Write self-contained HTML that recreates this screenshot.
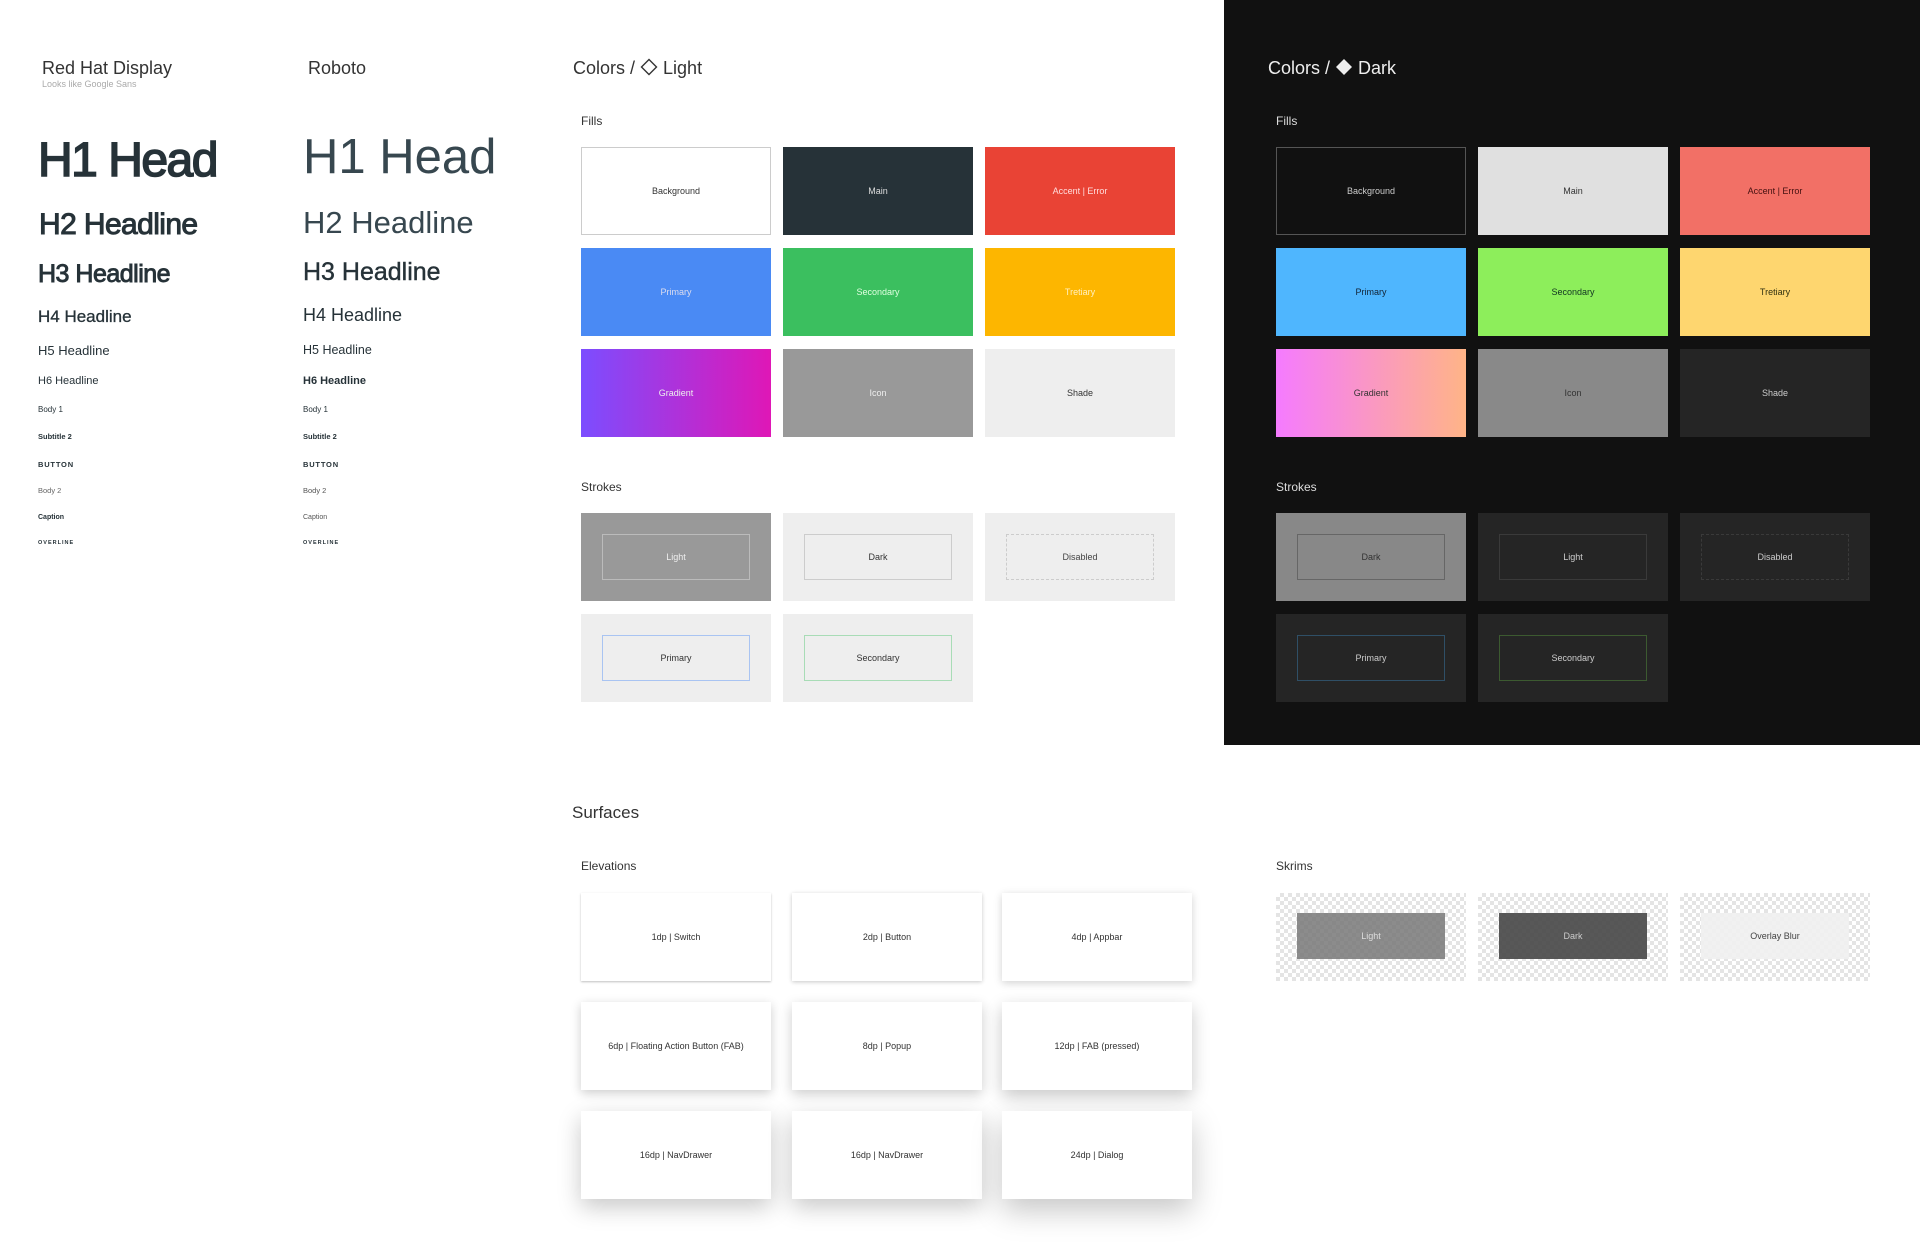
<!DOCTYPE html>
<html><head><meta charset="utf-8"><style>
*{margin:0;padding:0;box-sizing:border-box}
body{width:1920px;height:1242px;background:#fff;position:relative;overflow:hidden;font-family:"Liberation Sans",sans-serif;color:#263238}
.a{position:absolute;white-space:nowrap}
.sw{position:absolute;width:190px;height:88px;display:flex;align-items:center;justify-content:center;font-size:9px}
.in{position:absolute;left:21px;top:21px;width:148px;height:46px;display:flex;align-items:center;justify-content:center;font-size:9px}
.card{position:absolute;width:190px;height:88px;background:#fff;display:flex;align-items:center;justify-content:center;font-size:9px;color:#333}
.chk{background-color:#fff;background-image:conic-gradient(#e4e4e4 25%,#fff 0 50%,#e4e4e4 0 75%,#fff 0);background-size:8px 8px}
.md{-webkit-text-stroke:0.9px #263238}
</style></head><body>

<!-- Typography -->
<div class="a" style="left:42px;top:58px;font-size:18px;color:#333">Red Hat Display</div>
<div class="a" style="left:42px;top:79px;font-size:9px;color:#aaa">Looks like Google Sans</div>
<div class="a" style="left:308px;top:58px;font-size:18px;color:#333">Roboto</div>

<div class="a md" style="left:38px;top:131px;font-size:48px;letter-spacing:-1.5px;line-height:60px;-webkit-text-stroke:1.6px #263238">H1 Head</div>
<div class="a md" style="left:39px;top:205px;font-size:30px;letter-spacing:-0.6px;line-height:40px;-webkit-text-stroke:1px #263238">H2 Headline</div>
<div class="a md" style="left:38px;top:258px;font-size:25px;letter-spacing:-0.5px;line-height:32px">H3 Headline</div>
<div class="a" style="left:38px;top:305px;font-size:17px;line-height:24px;-webkit-text-stroke:0.3px #263238">H4 Headline</div>
<div class="a" style="left:38px;top:342px;font-size:13px;line-height:18px">H5 Headline</div>
<div class="a" style="left:38px;top:374px;font-size:11px;line-height:14px">H6 Headline</div>
<div class="a" style="left:38px;top:405px;font-size:8px;line-height:10px">Body 1</div>
<div class="a" style="left:38px;top:432px;font-size:7.5px;font-weight:bold;line-height:10px">Subtitle 2</div>
<div class="a" style="left:38px;top:460px;font-size:7.5px;font-weight:bold;letter-spacing:0.8px;line-height:10px">BUTTON</div>
<div class="a" style="left:38px;top:486px;font-size:7.5px;color:#666;line-height:10px">Body 2</div>
<div class="a" style="left:38px;top:513px;font-size:7px;font-weight:bold;line-height:10px">Caption</div>
<div class="a" style="left:38px;top:539px;font-size:5.5px;font-weight:bold;letter-spacing:1px;line-height:8px">OVERLINE</div>

<div class="a" style="left:303px;top:127px;font-size:49px;font-weight:300;line-height:60px;color:#37474f">H1 Head</div>
<div class="a" style="left:303px;top:203px;font-size:31px;line-height:40px;color:#37474f">H2 Headline</div>
<div class="a" style="left:303px;top:256px;font-size:25px;line-height:32px;-webkit-text-stroke:0.4px #263238">H3 Headline</div>
<div class="a" style="left:303px;top:303px;font-size:18px;line-height:24px">H4 Headline</div>
<div class="a" style="left:303px;top:341px;font-size:12.5px;line-height:18px">H5 Headline</div>
<div class="a" style="left:303px;top:374px;font-size:11px;font-weight:bold;line-height:14px">H6 Headline</div>
<div class="a" style="left:303px;top:405px;font-size:8px;line-height:10px">Body 1</div>
<div class="a" style="left:303px;top:432px;font-size:7.5px;font-weight:bold;line-height:10px">Subtitle 2</div>
<div class="a" style="left:303px;top:460px;font-size:7.5px;font-weight:bold;letter-spacing:0.8px;line-height:10px">BUTTON</div>
<div class="a" style="left:303px;top:486px;font-size:7.5px;color:#555;line-height:10px">Body 2</div>
<div class="a" style="left:303px;top:513px;font-size:7px;color:#555;line-height:10px">Caption</div>
<div class="a" style="left:303px;top:539px;font-size:5.5px;font-weight:bold;letter-spacing:1px;line-height:8px">OVERLINE</div>

<!-- Light colors -->
<div class="a" style="left:573px;top:57px;font-size:18px;color:#333;line-height:22px">Colors / <svg width="18" height="18" viewBox="0 0 18 18" style="vertical-align:-2px"><path d="M9 1.5L16.5 9 9 16.5 1.5 9Z" fill="none" stroke="#333" stroke-width="1.4"/></svg> Light</div>
<div class="a" style="left:581px;top:114px;font-size:12px;color:#333">Fills</div>
<div class="sw" style="left:581px;top:147px;border:1px solid #ccc;color:#333">Background</div>
<div class="sw" style="left:783px;top:147px;background:#263238;color:#ddd">Main</div>
<div class="sw" style="left:985px;top:147px;background:#e94335;color:#fdd">Accent | Error</div>
<div class="sw" style="left:581px;top:248px;background:#4a8af4;color:#dde">Primary</div>
<div class="sw" style="left:783px;top:248px;background:#3bbf5f;color:#e0ffe0">Secondary</div>
<div class="sw" style="left:985px;top:248px;background:#fdb600;color:#fff0c0">Tretiary</div>
<div class="sw" style="left:581px;top:349px;background:linear-gradient(90deg,#7c4dff,#df17b6);color:#eee">Gradient</div>
<div class="sw" style="left:783px;top:349px;background:#999;color:#eee">Icon</div>
<div class="sw" style="left:985px;top:349px;background:#eee;color:#333">Shade</div>

<div class="a" style="left:581px;top:480px;font-size:12px;color:#333">Strokes</div>
<div class="sw" style="left:581px;top:513px;background:#999"><div class="in" style="border:1px solid #bbb;color:#eee">Light</div></div>
<div class="sw" style="left:783px;top:513px;background:#eee"><div class="in" style="border:1px solid #ccc;color:#333">Dark</div></div>
<div class="sw" style="left:985px;top:513px;background:#eee"><div class="in" style="border:1px dashed #ccc;color:#444">Disabled</div></div>
<div class="sw" style="left:581px;top:614px;background:#eee"><div class="in" style="border:1px solid #a9c4f2;color:#333">Primary</div></div>
<div class="sw" style="left:783px;top:614px;background:#eee"><div class="in" style="border:1px solid #a8dcb6;color:#333">Secondary</div></div>

<!-- Dark panel -->
<div class="a" style="left:1224px;top:0;width:696px;height:745px;background:#111"></div>
<div class="a" style="left:1268px;top:57px;font-size:18px;color:#eee;line-height:22px">Colors / <svg width="18" height="18" viewBox="0 0 18 18" style="vertical-align:-2px"><path d="M9 1L17 9 9 17 1 9Z" fill="#eee"/></svg> Dark</div>
<div class="a" style="left:1276px;top:114px;font-size:12px;color:#ddd">Fills</div>
<div class="sw" style="left:1276px;top:147px;border:1px solid #555;color:#ccc">Background</div>
<div class="sw" style="left:1478px;top:147px;background:#e0e0e0;color:#333">Main</div>
<div class="sw" style="left:1680px;top:147px;background:#f27066;color:#411">Accent | Error</div>
<div class="sw" style="left:1276px;top:248px;background:#4fb6fe;color:#123">Primary</div>
<div class="sw" style="left:1478px;top:248px;background:#8dee5b;color:#132">Secondary</div>
<div class="sw" style="left:1680px;top:248px;background:#fed66f;color:#331">Tretiary</div>
<div class="sw" style="left:1276px;top:349px;background:linear-gradient(90deg,#f57bff,#ffb487);color:#333">Gradient</div>
<div class="sw" style="left:1478px;top:349px;background:#898989;color:#333">Icon</div>
<div class="sw" style="left:1680px;top:349px;background:#252525;color:#ccc">Shade</div>

<div class="a" style="left:1276px;top:480px;font-size:12px;color:#ddd">Strokes</div>
<div class="sw" style="left:1276px;top:513px;background:#888"><div class="in" style="border:1px solid #666;color:#333">Dark</div></div>
<div class="sw" style="left:1478px;top:513px;background:#252525"><div class="in" style="border:1px solid #3a3a3a;color:#ccc">Light</div></div>
<div class="sw" style="left:1680px;top:513px;background:#252525"><div class="in" style="border:1px dashed #3a3a3a;color:#ccc">Disabled</div></div>
<div class="sw" style="left:1276px;top:614px;background:#252525"><div class="in" style="border:1px solid #2f4f66;color:#ccc">Primary</div></div>
<div class="sw" style="left:1478px;top:614px;background:#252525"><div class="in" style="border:1px solid #3c5a30;color:#ccc">Secondary</div></div>

<!-- Surfaces -->
<div class="a" style="left:572px;top:803px;font-size:17px;color:#333">Surfaces</div>
<div class="a" style="left:581px;top:859px;font-size:12px;color:#333">Elevations</div>
<div class="card" style="left:581px;top:893px;box-shadow:0 1px 2px rgba(0,0,0,.25)">1dp | Switch</div>
<div class="card" style="left:792px;top:893px;box-shadow:0 1px 4px rgba(0,0,0,.22)">2dp | Button</div>
<div class="card" style="left:1002px;top:893px;box-shadow:0 2px 8px rgba(0,0,0,.18)">4dp | Appbar</div>
<div class="card" style="left:581px;top:1002px;box-shadow:0 3px 10px rgba(0,0,0,.2)">6dp | Floating Action Button (FAB)</div>
<div class="card" style="left:792px;top:1002px;box-shadow:0 4px 12px rgba(0,0,0,.2)">8dp | Popup</div>
<div class="card" style="left:1002px;top:1002px;box-shadow:0 6px 16px rgba(0,0,0,.22)">12dp | FAB (pressed)</div>
<div class="card" style="left:581px;top:1111px;box-shadow:0 8px 22px rgba(0,0,0,.22)">16dp | NavDrawer</div>
<div class="card" style="left:792px;top:1111px;box-shadow:0 8px 22px rgba(0,0,0,.22)">16dp | NavDrawer</div>
<div class="card" style="left:1002px;top:1111px;box-shadow:0 12px 28px rgba(0,0,0,.22)">24dp | Dialog</div>

<div class="a" style="left:1276px;top:859px;font-size:12px;color:#333">Skrims</div>
<div class="sw chk" style="left:1276px;top:893px"><div class="in" style="left:21px;top:20px;width:148px;height:46px;background:rgba(120,120,120,.85);color:#ddd">Light</div></div>
<div class="sw chk" style="left:1478px;top:893px"><div class="in" style="left:21px;top:20px;width:148px;height:46px;background:rgba(70,70,70,.9);color:#ccc">Dark</div></div>
<div class="sw chk" style="left:1680px;top:893px"><div class="in" style="left:21px;top:20px;width:148px;height:46px;background:rgba(240,240,240,.9);color:#444">Overlay Blur</div></div>

</body></html>
